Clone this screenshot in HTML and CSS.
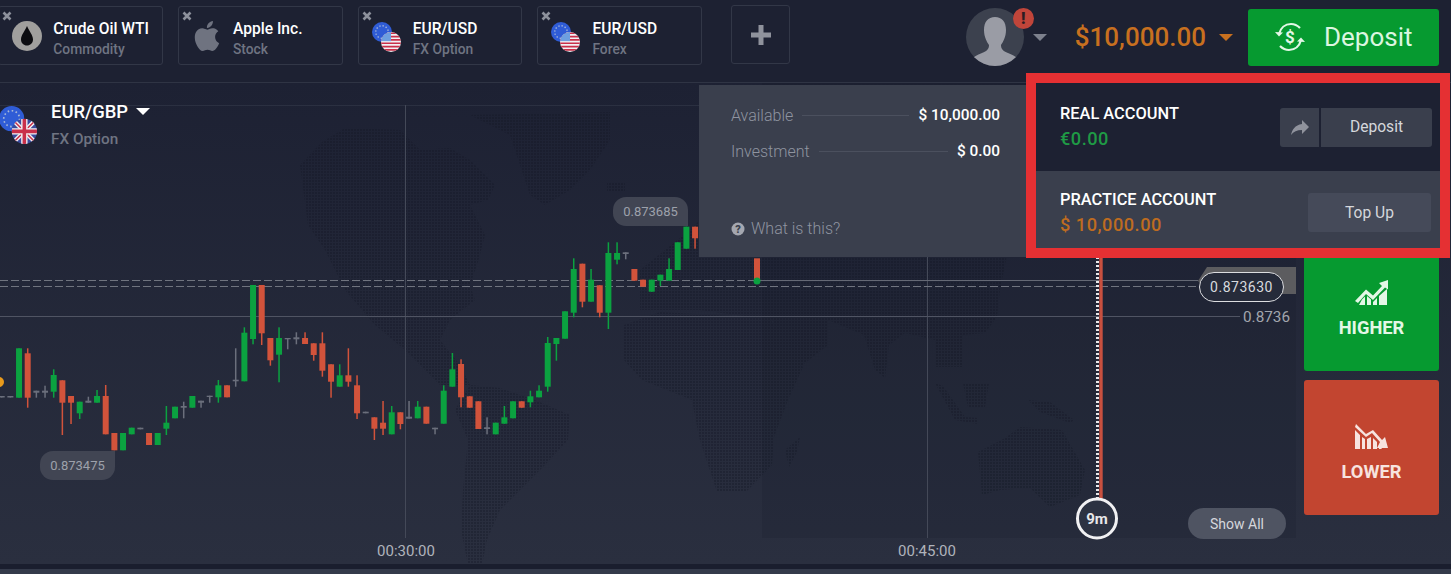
FILE: index.html
```html
<!DOCTYPE html>
<html lang="en">

<head>
    <meta charset="UTF-8">
    <meta name="viewport" content="width=device-width, initial-scale=1.0">
    <title>Traderoom</title>
    <link rel="stylesheet" href="styles.css">
</head>

<body>

    <!-- shared flag symbols -->
    <svg class="defs" width="0" height="0">
        <defs>
            <clipPath id="clipFlag"><circle cx="12" cy="12" r="12"></circle></clipPath>
            <symbol id="flagEu" viewBox="0 0 24 24">
                <circle cx="12" cy="12" r="12" fill="#2f5cd6"></circle>
                <circle cx="12" cy="12" r="7.5" fill="none" stroke="#a9b9d8" stroke-width="1.6" stroke-dasharray="1.5 2.4"></circle>
            </symbol>
            <symbol id="flagUs" viewBox="0 0 24 24">
                <g clip-path="url(#clipFlag)">
                    <rect width="24" height="24" fill="#f1f1f4"></rect>
                    <path d="M0 1.5h24M0 5.5h24M0 9.5h24M0 13.5h24M0 17.5h24M0 21.5h24" stroke="#c9304a" stroke-width="2"></path>
                    <rect width="12" height="11" fill="#6d9fe0"></rect>
                </g>
            </symbol>
            <symbol id="flagUk" viewBox="0 0 24 24">
                <g clip-path="url(#clipFlag)">
                    <rect width="24" height="24" fill="#3a4a9c"></rect>
                    <path d="M0 0L24 24M24 0L0 24" stroke="#f1f1f4" stroke-width="4"></path>
                    <path d="M0 0L24 24M24 0L0 24" stroke="#c9304a" stroke-width="1.4"></path>
                    <path d="M12 0V24M0 12H24" stroke="#f1f1f4" stroke-width="6"></path>
                    <path d="M12 0V24M0 12H24" stroke="#c9304a" stroke-width="3.4"></path>
                </g>
            </symbol>
            <symbol id="tabClose" viewBox="0 0 10 10">
                <path d="M1.5 1.5L8.5 8.5M8.5 1.5L1.5 8.5" stroke="#8d919c" stroke-width="2.6"></path>
            </symbol>
            <pattern id="mapDots" width="3" height="3" patternUnits="userSpaceOnUse">
                <rect width="2" height="2" fill="#141726"></rect>
            </pattern>
        </defs>
    </svg>

    <div class="page">
        <header class="topbar">
            <div class="tabs">
                <div class="tab">
                    <svg class="tab-close"><use href="#tabClose"></use></svg>
                    <svg class="tab-icon" viewBox="0 0 36 36">
                        <circle cx="18" cy="18" r="15" fill="#a09f9d"></circle>
                        <path d="M18 8C20 13 24 17 24 21.5C24 25 21.300 27.500 18 27.500C14.700 27.500 12 25 12 21.500C12 17 16 13 18 8Z" fill="#0c0c10"></path>
                    </svg>
                    <div class="tab-text">
                        <div class="tab-name">Crude Oil WTI</div>
                        <div class="tab-type">Commodity</div>
                    </div>
                </div>
                <div class="tab">
                    <svg class="tab-close"><use href="#tabClose"></use></svg>
                    <svg class="tab-icon" viewBox="0 0 24 24" fill="#6f7380">
                        <path d="M18.71,19.5C17.88,20.74 17,21.95 15.66,21.97C14.32,22 13.89,21.18 12.37,21.18C10.84,21.18 10.37,21.95 9.1,22C7.79,22.05 6.8,20.68 5.96,19.47C4.25,17 2.94,12.45 4.7,9.39C5.57,7.87 7.13,6.91 8.82,6.88C10.1,6.86 11.32,7.75 12.11,7.75C12.89,7.75 14.37,6.68 15.92,6.84C16.57,6.87 18.39,7.1 19.56,8.82C19.47,8.88 17.39,10.1 17.41,12.63C17.44,15.65 20.06,16.66 20.09,16.67C20.06,16.74 19.67,18.11 18.71,19.5M13,3.5C13.73,2.67 14.94,2.04 15.94,2C16.07,3.17 15.6,4.35 14.9,5.19C14.21,6.04 13.07,6.7 11.95,6.61C11.8,5.46 12.36,4.26 13,3.5Z"></path>
                    </svg>
                    <div class="tab-text">
                        <div class="tab-name">Apple Inc.</div>
                        <div class="tab-type">Stock</div>
                    </div>
                </div>
                <div class="tab">
                    <svg class="tab-close"><use href="#tabClose"></use></svg>
                    <svg class="tab-icon" viewBox="0 0 36 36">
                        <use href="#flagEu" x="3" y="4" width="20" height="20"></use>
                        <use href="#flagUs" x="12" y="14" width="20" height="20"></use>
                    </svg>
                    <div class="tab-text">
                        <div class="tab-name">EUR/USD</div>
                        <div class="tab-type">FX Option</div>
                    </div>
                </div>
                <div class="tab">
                    <svg class="tab-close"><use href="#tabClose"></use></svg>
                    <svg class="tab-icon" viewBox="0 0 36 36">
                        <use href="#flagEu" x="3" y="4" width="20" height="20"></use>
                        <use href="#flagUs" x="12" y="14" width="20" height="20"></use>
                    </svg>
                    <div class="tab-text">
                        <div class="tab-name">EUR/USD</div>
                        <div class="tab-type">Forex</div>
                    </div>
                </div>
                <div class="tab-add">
                    <svg width="20" height="20" viewBox="0 0 20 20" fill="#8f929c">
                        <path d="M7.500 0h5v7.500H20v5h-7.500V20h-5v-7.500H0v-5h7.500z"></path>
                    </svg>
                </div>
            </div>

            <div class="account-bar">
                <div class="avatar">
                    <svg viewBox="0 0 58 58" width="58" height="58">
                        <clipPath id="clipAvatar"><circle cx="29" cy="29" r="29"></circle></clipPath>
                        <circle cx="29" cy="29" r="29" fill="#3c414e"></circle>
                        <path clip-path="url(#clipAvatar)" fill="#9a9ca5" d="M29 9C36 9 40 14 40 22C40 29 37 34 35 37C35 41 37 43 42 45C47 47 51 49 54 53V58H4V53C7 49 11 47 16 45C21 43 23 41 23 37C21 34 18 29 18 22C18 14 22 9 29 9Z"></path>
                    </svg>
                    <span class="avatar-badge">!</span>
                </div>
                <span class="caret caret-grey"></span>
                <span class="balance">$10,000.00</span>
                <span class="caret caret-orange"></span>
                <div class="deposit-main">
                    <svg width="32" height="30" viewBox="0 0 32 30" fill="none" stroke="#e3f7e6" stroke-width="2.200">
                        <path d="M5 12C6.500 6 11 2 17 2C21 2 24 4 26 6"></path>
                        <path d="M27 18C25.500 24 21 28 15 28C11 28 8 26 6 24"></path>
                        <path d="M1 10L5 14.500L9 10.500" stroke="none" fill="#e3f7e6"></path>
                        <path d="M31 20L27 15.500L23 19.500" stroke="none" fill="#e3f7e6"></path>
                        <text x="16" y="21" text-anchor="middle" class="deposit-sign">$</text>
                    </svg>
                    <span>Deposit</span>
                </div>
            </div>
        </header>

        <main class="workspace">
            <section class="chart">
                <svg class="chart-svg" viewBox="0 83 1296 481" width="1296" height="481">
                    <!-- world map -->
                    <g fill="url(#mapDots)" opacity="0.36">
                        <polygon points="300,165 322,142 345,128 400,130 420,150 450,148 470,160 495,185 488,200 470,205 485,235 478,262 470,285 475,300 450,320 440,340 460,365 470,385 440,385 405,350 375,325 345,290 325,250 308,225"></polygon>
                        <polygon points="470,385 500,388 535,400 570,415 568,440 545,465 520,490 500,510 487,540 482,565 468,565 461,530 463,490 468,440 455,410"></polygon>
                        <polygon points="470,115 610,112 610,140 590,170 570,190 545,205 530,195 520,165 510,135"></polygon>
                        <polygon points="607,183 625,183 625,192 607,192"></polygon>
                        <polygon points="640,270 690,230 760,160 800,120 900,100 1000,100 1020,120 1060,135 1090,180 1075,200 1040,215 1010,240 1000,290 997,317 985,333 963,335 963,367 935,367 935,340 905,333 889,345 885,378 875,370 864,335 828,320 828,345 800,367 775,345 774,320 700,310 640,310"></polygon>
                        <polygon points="624,325 660,312 770,318 790,355 803,367 788,400 774,437 772,465 746,492 717,492 699,437 692,400 642,380 624,360"></polygon>
                        <polygon points="785,450 800,437 797,452 789,467"></polygon>
                        <polygon points="935,383 943,386 965,417 978,418 978,424 955,420"></polygon>
                        <polygon points="963,383 989,383 985,407 968,407"></polygon>
                        <polygon points="1028,400 1050,402 1074,420 1070,423 1040,412"></polygon>
                        <polygon points="978,452 1005,438 1020,427 1062,430 1085,470 1080,495 1050,507 1030,488 1000,490 982,495"></polygon>
                    </g>

                    <rect x="762" y="83" width="534" height="455" fill="#141726" opacity="0.16"></rect>

                    <!-- grid -->
                    <path d="M0 105.500H700" stroke="#2b3041"></path>
                    <path d="M405.500 105V538M927.500 105V538" stroke="#444958"></path>
                    <path d="M0 316.500H1240" stroke="#505463"></path>
                    <path d="M0 280.500H757M0 286.500H1198" stroke="#70747f" stroke-dasharray="8 3"></path>
                    <path d="M757 280.500H1198" stroke="#656975"></path>

                    <g id="candles"></g>
                    <circle cx="757" cy="281" r="3.500" fill="#0ba240"></circle>
                    <circle cx="-1" cy="382" r="5" fill="#e89a1c"></circle>

                    <!-- price marker -->
                    <polygon points="1207,267 1296,267 1296,294 1210,294 1198,281" fill="#5c5c5f"></polygon>

                    <!-- expiry -->
                    <path d="M1101 257V500" stroke="#c8503f" stroke-width="3.400"></path>
                    <path d="M1097.500 257V500" stroke="#e8e8ea" stroke-width="3" stroke-dasharray="2 2"></path>
                    <circle cx="1097" cy="518.500" r="19.500" fill="#2c3242" stroke="#f1f1f3" stroke-width="3"></circle>
                    <text x="1097" y="524" text-anchor="middle" class="expiry-text">9m</text>
                </svg>

                <div class="instrument">
                    <svg class="instrument-flags" viewBox="0 0 40 40">
                        <use href="#flagEu" x="0" y="0" width="26" height="26"></use>
                        <use href="#flagUk" x="13" y="13" width="26" height="26"></use>
                    </svg>
                    <div>
                        <div class="instrument-name">EUR/GBP <span class="caret caret-white"></span></div>
                        <div class="instrument-type">FX Option</div>
                    </div>
                </div>

                <div class="pill pill-high">0.873685</div>
                <div class="pill pill-low">0.873475</div>
                <div class="price-tag">0.873630</div>
                <div class="axis-price">0.8736</div>
                <div class="axis-time time-a">00:30:00</div>
                <div class="axis-time time-b">00:45:00</div>
                <div class="show-all">Show All</div>
            </section>

            <aside class="trade">
                <div class="trade-btn trade-higher">
                    <svg width="33" height="25" viewBox="0 0 33 25" fill="#e3f7e6">
                        <path d="M0 21L11 9.500L18 15.500L27 6L24 3L33 0V9.500L30 7.500L18 20L11 14L3 23Z"></path>
                        <path d="M7 19.500L10 16.500V25H4ZM12 16L16 19.500V25H12ZM18 22L22 18V25H18ZM24 16L32 9V25H24Z"></path>
                    </svg>
                    <span>HIGHER</span>
                </div>
                <div class="trade-btn trade-lower">
                    <svg width="33" height="25" viewBox="0 0 33 25" fill="#f7e3df">
                        <path d="M1 0L11 10L18 6L27 16L30 13L33 24H22L25 18L17 9L11 13L0 3Z"></path>
                        <path d="M0 6L5 11V25H0ZM7 13L10 15V25H7ZM12 15L16 13V25H12ZM18 14L22 18V25H18ZM24 21L27 25H24Z"></path>
                    </svg>
                    <span>LOWER</span>
                </div>
            </aside>
        </main>

        <div class="strip"></div>
    </div>

    <!-- info panel next to the account menu -->
    <div class="info-panel">
        <div class="info-row"><span>Available</span><i></i><b>$ 10,000.00</b></div>
        <div class="info-row"><span>Investment</span><i></i><b>$ 0.00</b></div>
        <div class="info-help">
            <svg width="14" height="14" viewBox="0 0 14 14">
                <circle cx="7" cy="7" r="6.500" fill="#a4a7b0"></circle>
                <text x="7" y="10.500" text-anchor="middle" class="help-mark">?</text>
            </svg>
            What is this?
        </div>
    </div>

    <div class="account-menu">
        <div class="account-row">
            <div>
                <div class="account-title">REAL ACCOUNT</div>
                <div class="account-amount amount-green">€0.00</div>
            </div>
            <div class="account-actions">
                <div class="action-icon">
                    <svg width="24" height="24" viewBox="0 0 24 24" fill="#90939d">
                        <path d="M14 9V5l7 7-7 7v-4.100c-5 0-8.500 1.600-11 5.100 1-5 4-10 11-11z"></path>
                    </svg>
                </div>
                <div class="action-btn action-deposit">Deposit</div>
            </div>
        </div>
        <div class="account-row account-row-active">
            <div>
                <div class="account-title">PRACTICE ACCOUNT</div>
                <div class="account-amount amount-orange">$ 10,000.00</div>
            </div>
            <div class="action-btn action-topup">Top Up</div>
        </div>
    </div>

    <script src="chart.js"></script>
</body>

</html>
```

FILE: styles.css
```css
* {
    box-sizing: border-box;
}

body {
    font-family: Roboto, "Liberation Sans", sans-serif;
    margin: 0;
    width: 1451px;
    height: 574px;
    overflow: hidden;
    position: relative;
    background-color: #1d2132;
    color: #fff;
}

.defs {
    position: absolute;
}

.page {
    display: flex;
    flex-direction: column;
    height: 574px;
}

/* top bar */
.topbar {
    display: flex;
    justify-content: space-between;
    height: 83px;
    flex-shrink: 0;
    padding: 5px 12px 0 0;
    border-bottom: 1px solid #2f3444;
}

.tabs {
    display: flex;
    align-items: flex-start;
    gap: 15px;
    margin-left: -1.7px;
}

.tab {
    position: relative;
    display: flex;
    align-items: center;
    width: 164.7px;
    height: 59px;
    margin-top: 1px;
    padding-left: 10px;
    border: 1px solid #323747;
    border-radius: 3px;
}

.tab-close {
    position: absolute;
    left: 3px;
    top: 4px;
    width: 10px;
    height: 10px;
}

.tab-icon {
    width: 36px;
    height: 36px;
    margin-right: 8px;
    flex-shrink: 0;
}

.tab-text {
    margin-top: 7px;
}

.tab-name {
    font-size: 15.6px;
    font-weight: 500;
    line-height: 20px;
}

.tab-type {
    font-size: 13.8px;
    font-weight: 500;
    line-height: 20px;
    color: #6f7482;
}

.tab-add {
    display: flex;
    align-items: center;
    justify-content: center;
    width: 59px;
    height: 59px;
    margin-left: 14px;
    border: 1px solid #323747;
    border-radius: 3px;
}

.account-bar {
    display: flex;
    align-items: center;
    height: 64px;
}

.avatar {
    position: relative;
    width: 58px;
    height: 58px;
}

.avatar-badge {
    position: absolute;
    right: -10px;
    top: 0;
    width: 21px;
    height: 21px;
    border-radius: 50%;
    background-color: #c0453a;
    color: #2a1c22;
    font-size: 16px;
    font-weight: 900;
    line-height: 21px;
    text-align: center;
}

.caret {
    display: inline-block;
    width: 0;
    height: 0;
    border-left: 7px solid transparent;
    border-right: 7px solid transparent;
}

.caret-grey {
    margin: 0 28px 0 9px;
    border-top: 7px solid #7d818d;
}

.caret-orange {
    margin: 0 15px 0 13px;
    border-top: 7px solid #c8701f;
}

.caret-white {
    margin-left: 3px;
    vertical-align: 3px;
    border-top: 7px solid #fff;
}

.balance {
    font-size: 26px;
    font-weight: 500;
    color: #c8701f;
}

.deposit-main {
    display: flex;
    align-items: center;
    width: 191px;
    height: 57px;
    padding-left: 26px;
    gap: 18px;
    border-radius: 3px;
    background-color: #069a30;
    color: #dcf6e0;
    font-size: 26px;
}

.deposit-sign {
    font-size: 17px;
    font-weight: 700;
    fill: #e3f7e6;
    stroke: none;
    font-family: Roboto, sans-serif;
}

/* chart */
.workspace {
    display: flex;
    flex: 1;
    background: linear-gradient(#1d2133, #2a2f3f);
}

.chart {
    position: relative;
    width: 1296px;
    flex-shrink: 0;
}

.chart-svg {
    display: block;
}

.expiry-text {
    font-family: Roboto, sans-serif;
    font-size: 15px;
    font-weight: 700;
    fill: #e8e8ea;
}

.instrument {
    position: absolute;
    left: -1px;
    top: 17px;
    display: flex;
    gap: 13px;
}

.instrument-flags {
    width: 39px;
    height: 39px;
    margin-top: 6px;
}

.instrument-name {
    font-size: 18.4px;
    font-weight: 500;
    line-height: 24px;
}

.instrument-type {
    margin-top: 3px;
    font-size: 15.3px;
    font-weight: 500;
    line-height: 24px;
    color: #6f7482;
}

.pill {
    position: absolute;
    width: 75px;
    height: 29px;
    border-radius: 13px;
    background-color: #414553;
    color: #9da1ab;
    font-size: 13px;
    line-height: 29px;
    text-align: center;
}

.pill-high {
    left: 613px;
    top: 114px;
    border-bottom-right-radius: 0;
}

.pill-low {
    left: 40px;
    top: 368px;
    border-top-right-radius: 0;
}

.price-tag {
    position: absolute;
    left: 1199px;
    top: 189px;
    width: 85px;
    height: 30px;
    border: 1px solid #dcdde0;
    border-radius: 15px;
    background-color: #262b3a;
    color: #d8dade;
    font-size: 14px;
    letter-spacing: 0.5px;
    line-height: 28px;
    text-align: center;
}

.axis-price {
    position: absolute;
    left: 1243px;
    top: 224px;
    font-size: 15.3px;
    line-height: 20px;
    color: #a2a5ad;
}

.axis-time {
    position: absolute;
    top: 458px;
    width: 80px;
    font-size: 15px;
    line-height: 20px;
    text-align: center;
    color: #b0b3bb;
}

.time-a {
    left: 366px;
}

.time-b {
    left: 887px;
}

.show-all {
    position: absolute;
    left: 1188px;
    top: 425px;
    width: 98px;
    height: 31px;
    border-radius: 16px;
    background-color: #4f5462;
    color: #d5d7dc;
    font-size: 14px;
    line-height: 33px;
    text-align: center;
}

/* trade buttons */
.trade {
    display: flex;
    flex-direction: column;
    gap: 9px;
    padding: 153px 0 0 8px;
}

.trade-btn {
    display: flex;
    flex-direction: column;
    align-items: center;
    justify-content: center;
    gap: 11px;
    width: 135px;
    height: 135px;
    padding-top: 13px;
    border-radius: 3px;
    font-size: 18.3px;
    font-weight: 700;
    line-height: 24px;
}

.trade-higher {
    background-color: #069a30;
    color: #e3f7e6;
}

.trade-lower {
    background-color: #c24530;
    color: #f7e3df;
}

.strip {
    height: 10px;
    flex-shrink: 0;
    background: linear-gradient(#1a1e2e 50%, #343a4a 50%);
}

/* overlays */
.info-panel {
    position: absolute;
    left: 699px;
    top: 85px;
    display: flex;
    flex-direction: column;
    width: 327px;
    height: 172px;
    padding: 20px 26px 18px 32px;
    background-color: #3a3f4d;
    color: #8f94a0;
    font-size: 16px;
    font-weight: 300;
}

.info-row {
    display: flex;
    align-items: center;
    height: 20px;
    margin-bottom: 16px;
}

.info-row i {
    flex: 1;
    height: 1px;
    margin: 0 9px;
    background-color: #4b505e;
}

.info-row b {
    color: #fff;
    font-size: 15.4px;
    font-weight: 500;
}

.info-help {
    display: flex;
    align-items: center;
    gap: 6px;
    margin-top: auto;
    line-height: 20px;
}

.help-mark {
    font-family: Roboto, sans-serif;
    font-size: 11px;
    font-weight: 900;
    fill: #3a3f4d;
}

.account-menu {
    position: absolute;
    left: 1026px;
    top: 73px;
    width: 424px;
    height: 185px;
    border: 10px solid #e53033;
    background-color: #1d2132;
}

.account-row {
    display: flex;
    align-items: center;
    justify-content: space-between;
    height: 88px;
    padding: 1px 8px 0 24px;
}

.account-row-active {
    height: 77px;
    padding: 9px 9px 0 24px;
    background-color: #3a3f4d;
}

.account-title {
    font-size: 16.4px;
    font-weight: 500;
    line-height: 20px;
}

.account-amount {
    margin-top: 2px;
    font-size: 18.2px;
    font-weight: 500;
    line-height: 26px;
    letter-spacing: 0.5px;
}

.amount-green {
    color: #1f9a45;
}

.amount-orange {
    color: #bf6c20;
}

.account-actions {
    display: flex;
    gap: 2px;
    margin-top: -1px;
}

.action-icon {
    display: flex;
    align-items: center;
    justify-content: center;
    width: 39px;
    height: 39px;
    border-radius: 3px 0 0 3px;
    background-color: #3a3f4d;
}

.action-btn {
    height: 39px;
    border-radius: 3px;
    color: #d5d7dc;
    font-size: 15.6px;
    line-height: 39px;
    text-align: center;
}

.action-deposit {
    width: 111px;
    border-radius: 0 3px 3px 0;
    background-color: #3a3f4d;
}

.action-topup {
    width: 123px;
    margin-top: -3px;
    line-height: 40px;
    background-color: #454a59;
}
```

FILE: chart.js
```js
// candles: [colour, body top, body bottom, wick top, wick bottom]
const candles = [
    ['n', 396, 397.5], ['n', 396, 397.5],
    ['g', 348.3, 397.7], ['r', 353.3, 397.7, 348.3, 407.7],
    ['n', 390.7, 392.7, 390.7, 397.7], ['n', 390.7, 392.7, 385.7, 397.7],
    ['g', 375, 391.7, 369.3, 397.7], ['r', 380.3, 402.7, 380.3, 435],
    ['r', 396, 402.7, 396, 424], ['g', 401.7, 413.3, 401.7, 419],
    ['n', 400.7, 402.7, 396.7, 402.7], ['g', 396, 402.7, 390, 402.7],
    ['r', 396, 434.3, 385, 434.3], ['r', 433, 450.3], ['g', 433, 450.3],
    ['g', 427.7, 434.3], ['n', 427.7, 429.3], ['r', 433, 445], ['g', 433, 445],
    ['g', 422.7, 428.7, 406, 435], ['g', 406.7, 418.3],
    ['n', 406, 407.7, 401.7, 418.3], ['g', 396, 407.7],
    ['n', 400.7, 402.7, 400.7, 407.7], ['n', 395.7, 397, 395.7, 402.7],
    ['g', 385.3, 397.3, 380, 402.7], ['r', 385.3, 397.3],
    ['n', 379.7, 381.3, 348.3, 386.7], ['g', 332.7, 381.3, 327.3, 381.3],
    ['g', 285, 339, 285, 344.3], ['r', 285, 333.3, 285, 345],
    ['r', 338, 360.3, 338, 365.7], ['g', 338, 354.7, 327.3, 382.3],
    ['n', 338, 339.3, 338, 349.3], ['n', 337.3, 339.3, 332.3, 344.3],
    ['r', 338, 344, 332.3, 344], ['r', 343.3, 355, 343.3, 360.7],
    ['r', 343.3, 370.7, 332.3, 376.7], ['r', 364.3, 381.7, 364.3, 397.7],
    ['g', 375.3, 386.7, 364.3, 386.7], ['r', 375.3, 381.7, 348.3, 386.7],
    ['r', 385.3, 413.3, 375.3, 419], ['n', 411.7, 413.3],
    ['r', 417.3, 428.7, 417.3, 440], ['r', 422.7, 428.7, 401, 435],
    ['g', 412.3, 434.3, 406, 434.3], ['r', 412.3, 424, 412.3, 429.3],
    ['n', 416.7, 418.7, 401, 418.7], ['g', 406.7, 418.3, 401, 418.3],
    ['r', 406.7, 423.7], ['n', 427.7, 429.3, 427.7, 434.3],
    ['g', 390.7, 423.7, 385.3, 423.7], ['g', 369.3, 386.7, 353, 386.7],
    ['r', 364, 397.3, 359.3, 407.3], ['r', 396.3, 407.7], ['r', 401.3, 429],
    ['n', 427.3, 429, 417.3, 434.3], ['g', 422.7, 434.3],
    ['g', 417.3, 423.7, 406, 423.7], ['g', 401.3, 418.3], ['r', 401.3, 407.7],
    ['g', 396.3, 402.3, 390.7, 407.3], ['g', 390.7, 397.3, 385.3, 397.3],
    ['g', 343, 386.7, 337, 391.7], ['g', 338, 344, 338, 360.7], ['g', 311.3, 338.7],
    ['g', 269, 312.7, 258.3, 317.3], ['r', 263.7, 301.7, 263.7, 307.3],
    ['g', 279.7, 301.7, 269, 301.7], ['r', 285.3, 312.7, 285.3, 317.3],
    ['g', 253, 312.7, 242.3, 329], ['g', 253, 259.7, 242.3, 264.3],
    ['n', 252.3, 254, 252.3, 259.3], ['r', 269, 280.7], ['r', 279.7, 286.7],
    ['g', 279.7, 291.7], ['g', 274.7, 280.7, 274.7, 286],
    ['g', 269, 280.7, 258.3, 280.7], ['g', 242.3, 270], ['g', 226.7, 248.7],
    ['r', 226.7, 238.3, 226.7, 248.7]
];

const colours = { g: '#0ba240', r: '#d2533b', n: '#6b6f7c' };
const group = document.getElementById('candles');

function addRect(x, y, width, height, fill) {
    const rect = document.createElementNS('http://www.w3.org/2000/svg', 'rect');
    rect.setAttribute('x', x);
    rect.setAttribute('y', y);
    rect.setAttribute('width', width);
    rect.setAttribute('height', height);
    rect.setAttribute('fill', fill);
    group.appendChild(rect);
}

candles.forEach((c, i) => {
    const x = 1.7 + i * 8.667;
    const fill = colours[c[0]];
    const wickTop = c[3] === undefined ? c[1] : c[3];
    const wickBottom = c[4] === undefined ? c[2] : c[4];
    addRect(x - 0.75, wickTop, 1.5, wickBottom - wickTop, fill);
    addRect(x - 3, c[1], 6, c[2] - c[1], fill);
});

// last candle, next to the current price
addRect(754, 258.3, 6, 22, colours.r);
```
